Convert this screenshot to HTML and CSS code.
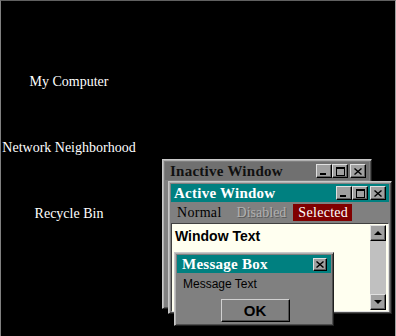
FILE: index.html
```html
<!DOCTYPE html>
<html lang="en">
<head>
    <meta charset="UTF-8">
    <title>Desktop Scheme</title>
    <link rel="stylesheet" href="styles.css">
</head>
<body>
<div class="desktop">
    <div class="icons">
        <div class="icon-label">My Computer</div>
        <div class="icon-label">Network Neighborhood</div>
        <div class="icon-label">Recycle Bin</div>
    </div>

    <div class="win win-inactive">
        <div class="titlebar">
            <span class="title">Inactive Window</span>
            <span class="tbtn min"><i></i></span>
            <span class="tbtn max"><i></i></span>
            <span class="tbtn close"><svg width="8" height="7" viewBox="0 0 8 7"><path d="M0.5 0.5 L7.5 6.5 M7.5 0.5 L0.5 6.5" stroke="#000" stroke-width="1.4"/></svg></span>
        </div>
    </div>

    <div class="win win-active">
        <div class="titlebar">
            <span class="title">Active Window</span>
            <span class="tbtn min"><i></i></span>
            <span class="tbtn max"><i></i></span>
            <span class="tbtn close"><svg width="8" height="7" viewBox="0 0 8 7"><path d="M0.5 0.5 L7.5 6.5 M7.5 0.5 L0.5 6.5" stroke="#000" stroke-width="1.4"/></svg></span>
        </div>
        <div class="menubar">
            <span class="menu-item">Normal</span>
            <span class="menu-item disabled">Disabled</span>
            <span class="menu-item selected">Selected</span>
        </div>
        <div class="client">
            <div class="client-text">Window Text</div>
            <div class="scrollbar">
                <span class="sbtn up"></span>
                <span class="strack"></span>
                <span class="sbtn down"></span>
            </div>
        </div>
    </div>

    <div class="win win-msg">
        <div class="titlebar">
            <span class="title">Message Box</span>
            <span class="tbtn close small"><svg width="8" height="7" viewBox="0 0 8 7"><path d="M0.5 0.5 L7.5 6.5 M7.5 0.5 L0.5 6.5" stroke="#000" stroke-width="1.4"/></svg></span>
        </div>
        <div class="msg-text">Message Text</div>
        <div class="msg-actions">
            <button class="ok-button">OK</button>
        </div>
    </div>
</div>
</body>
</html>
```

FILE: styles.css
```css
body {
    margin: 0;
    background-color: #000;
}

.desktop {
    position: relative;
    width: 396px;
    height: 336px;
    box-sizing: border-box;
    background-color: #000;
    border-top: 1px solid #606060;
    border-left: 1px solid #808080;
    border-right: 1px solid #a0a0a0;
    overflow: hidden;
}

.icons {
    display: flex;
    flex-direction: column;
    align-items: center;
    width: 136px;
    padding-top: 71px;
    gap: 47px;
}

.icon-label {
    font-family: "Liberation Serif", "Times New Roman", serif;
    font-size: 14px;
    line-height: 19px;
    color: #fff;
    white-space: nowrap;
}

.win {
    position: absolute;
    box-sizing: border-box;
    background-color: #808080;
    border: 1px solid;
    border-color: #c8c8c8 #202020 #202020 #c8c8c8;
    box-shadow: inset 1px 1px #b0b0b0, inset -1px -1px #505050;
    padding: 2px;
}

.win-inactive {
    left: 161px;
    top: 158px;
    width: 210px;
    height: 150px;
}

.win-active {
    left: 167px;
    top: 180px;
    width: 224px;
    height: 133px;
}

.win-msg {
    left: 173px;
    top: 251px;
    width: 160px;
    height: 74px;
}

.titlebar {
    display: flex;
    align-items: center;
    height: 18px;
    padding: 0 3px 0 3px;
    background-color: #008080;
    color: #fff;
}

.win-inactive .titlebar {
    padding-left: 5px;
    background-color: #707070;
    color: #101010;
}

.title {
    flex: 1;
    font-family: "Liberation Serif", "Times New Roman", serif;
    font-weight: bold;
    font-size: 15px;
    letter-spacing: 0.25px;
    white-space: nowrap;
}

.tbtn {
    display: flex;
    align-items: center;
    justify-content: center;
    box-sizing: border-box;
    width: 16px;
    height: 14px;
    background-color: #a0a0a0;
    border: 1px solid;
    border-color: #e0e0e0 #000 #000 #e0e0e0;
    box-shadow: inset -1px -1px #606060;
}

.tbtn.close {
    margin-left: 2px;
}

.tbtn.small {
    width: 14px;
    height: 13px;
}

.tbtn.min i {
    width: 6px;
    height: 2px;
    margin-top: 6px;
    margin-right: 2px;
    background-color: #000;
}

.tbtn.max i {
    width: 7px;
    height: 6px;
    border: 1px solid #000;
    border-top-width: 2px;
}

.menubar {
    display: flex;
    align-items: center;
    height: 19px;
    margin-top: 1px;
    padding-left: 6px;
    gap: 15px;
    font-family: "Liberation Serif", "Times New Roman", serif;
    font-size: 14px;
    letter-spacing: 0.3px;
}

.menu-item {
    color: #000;
}

.menu-item.disabled {
    letter-spacing: 0;
    color: #b0b0b0;
    text-shadow: 1px 1px #5a5a5a;
}

.menu-item.selected {
    margin-left: -8px;
    padding: 0 4px 0 5px;
    line-height: 17px;
    background-color: #800000;
    color: #fff;
}

.client {
    display: flex;
    height: 87px;
    margin-top: 1px;
    background-color: #fffff0;
    border: 1px solid;
    border-color: #404040 #e0e0e0 #e0e0e0 #404040;
}

.client-text {
    flex: 1;
    padding: 4px 3px;
    font-family: "Liberation Sans", Arial, sans-serif;
    font-weight: bold;
    font-size: 14px;
    color: #000;
}

.scrollbar {
    display: flex;
    flex-direction: column;
    width: 16px;
    margin: 1px 2px 1px 0;
    background-color: #c0c0c0;
}

.sbtn {
    position: relative;
    box-sizing: border-box;
    height: 16px;
    background-color: #a0a0a0;
    border: 1px solid;
    border-color: #e0e0e0 #000 #000 #e0e0e0;
    box-shadow: inset -1px -1px #606060;
}

.sbtn::after {
    content: "";
    position: absolute;
    left: 3px;
    top: 5px;
    border-left: 4px solid transparent;
    border-right: 4px solid transparent;
}

.sbtn.up::after {
    border-bottom: 4px solid #000;
}

.sbtn.down::after {
    border-top: 4px solid #000;
}

.strack {
    flex: 1;
}

.win-msg .titlebar {
    padding-left: 5px;
    padding-right: 4px;
}

.msg-text {
    padding: 4px 0 0 6px;
    height: 16px;
    font-family: "Liberation Sans", Arial, sans-serif;
    font-size: 12px;
    color: #000;
}

.msg-actions {
    display: flex;
    justify-content: center;
    padding-top: 6px;
    padding-left: 2px;
}

.ok-button {
    width: 69px;
    height: 23px;
    padding: 0;
    background-color: #808080;
    border: 1px solid;
    border-color: #d0d0d0 #000 #000 #d0d0d0;
    box-shadow: inset -1px -1px #505050;
    font-family: "Liberation Sans", Arial, sans-serif;
    font-weight: bold;
    font-size: 15px;
    color: #000;
}
```
